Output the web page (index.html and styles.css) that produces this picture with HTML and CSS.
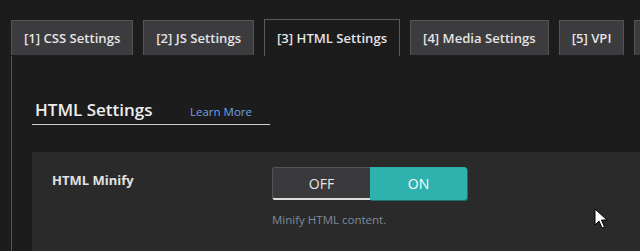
FILE: index.html
```html
<!DOCTYPE html>
<html lang="en">
<head>
    <meta charset="UTF-8">
    <title>HTML Settings</title>
    <link rel="stylesheet" href="styles.css">
</head>
<body>
    <nav class="tabs">
        <div class="tab">[1] CSS Settings</div>
        <div class="tab">[2] JS Settings</div>
        <div class="tab tab-active">[3] HTML Settings</div>
        <div class="tab">[4] Media Settings</div>
        <div class="tab">[5] VPI</div>
        <div class="tab tab-more"></div>
    </nav>

    <main class="panel">
        <!-- Section title -->
        <div class="section-head">
            <h3 class="section-title">HTML Settings</h3>
            <a class="learn-more" href="#">Learn More</a>
        </div>

        <!-- Option row -->
        <div class="option-row">
            <div class="option-label">HTML Minify</div>
            <div class="option-control">
                <div class="switch">
                    <span class="switch-off">OFF</span>
                    <span class="switch-on">ON</span>
                </div>
                <div class="option-desc">Minify HTML content.</div>
            </div>
        </div>
    </main>

    <svg class="cursor" width="14" height="22" viewBox="0 0 14 22">
        <path d="M1 1 L1 17 L5 13 L8 20 L10.5 19 L7.5 12 L13 12 Z" fill="#fff" stroke="#000" stroke-width="1"/>
    </svg>
</body>
</html>
```

FILE: styles.css
```css
:root {
    --bg: #1c1c1c;
    --tab-bg: #3c3b3e;
    --tab-border: #545454;
    --row-bg: #2a2a2a;
    --teal: #2fb1ae;
    --link: #6fa3e6;
}

* {
    margin: 0;
    padding: 0;
    box-sizing: border-box;
}

html,
body {
    width: 640px;
    height: 251px;
    overflow: hidden;
}

body {
    font-family: "Open Sans", sans-serif;
    background: var(--bg);
    color: #e6e6e6;
    position: relative;
}

/* Tabs */
.tabs {
    display: flex;
    align-items: flex-end;
    gap: 10px;
    padding: 19px 0 0 11px;
    height: 56px;
    white-space: nowrap;
    overflow: hidden;
}

.tab {
    height: 35px;
    margin-bottom: 1px;
    padding: 0 12px;
    display: flex;
    align-items: center;
    background: var(--tab-bg);
    border: 1px solid var(--tab-border);
    border-bottom: none;
    font-size: 13.1px;
    font-weight: 600;
    color: #e4e4e4;
    flex-shrink: 0;
}

.tab-active {
    height: 37px;
    margin-bottom: 0;
    background: var(--bg);
    border-color: #5c5c5c;
}

.tab-more {
    width: 40px;
}

/* Panel */
.panel {
    margin-left: 11px;
    border-left: 1px solid var(--tab-border);
    padding: 42px 0 0 20px;
    height: 195px;
    overflow: hidden;
}

.section-head {
    display: flex;
    align-items: baseline;
    width: 238px;
    padding: 0 0 3px 3px;
    border-bottom: 1px solid #cfcfcf;
}

.section-title {
    font-size: 17px;
    font-weight: 600;
    color: #ededed;
    width: 155px;
}

.learn-more {
    font-size: 11.5px;
    color: var(--link);
    text-decoration: none;
}

.option-row {
    display: flex;
    margin-top: 27px;
    background: var(--row-bg);
    padding: 15px 0 40px 20px;
}

.option-label {
    width: 220px;
    padding-top: 4px;
    font-size: 13px;
    font-weight: 700;
    color: #e2e2e2;
}

/* Switch */
.switch {
    display: flex;
    width: 195px;
    height: 33px;
}

.switch span {
    flex: 1;
    display: flex;
    align-items: center;
    justify-content: center;
    font-size: 14px;
}

.switch-off {
    background: #3a393c;
    border: 1px solid #555;
    border-right: none;
    border-bottom: 2px solid #dcdcdc;
    border-radius: 3px 0 0 3px;
    color: #e6e6e6;
}

.switch-on {
    background: var(--teal);
    color: #fff;
    border-radius: 0 3px 3px 0;
    box-shadow: 1px 1px 0 #1f6f6d;
}

.option-desc {
    margin-top: 12px;
    font-size: 11.5px;
    color: #7d8b98;
}

.cursor {
    position: absolute;
    left: 594px;
    top: 208px;
}
```
